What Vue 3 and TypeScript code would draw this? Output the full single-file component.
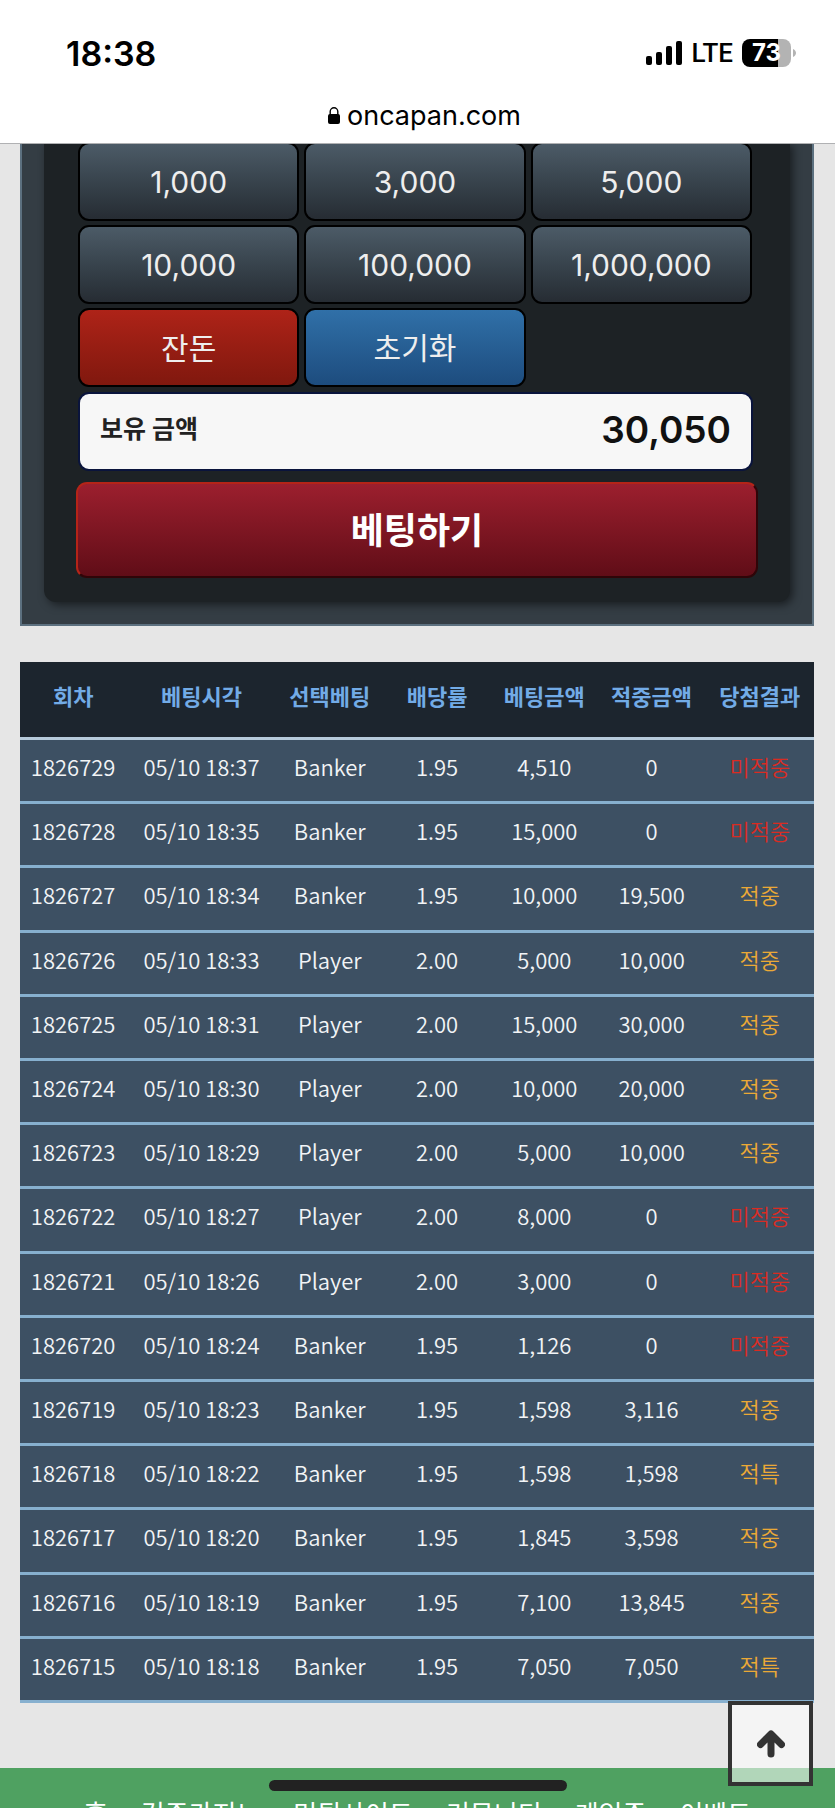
<script setup lang="ts">
interface Bet {
  round: string
  time: string
  pick: string
  odds: string
  stake: string
  payout: string
  result: '적중' | '미적중' | '적특'
}

const amounts: string[] = ['1,000', '3,000', '5,000', '10,000', '100,000', '1,000,000']
const balance = '30,050'
const columns: string[] = ['회차', '베팅시각', '선택베팅', '배당률', '베팅금액', '적중금액', '당첨결과']

const bets: Bet[] = [
  { round: '1826729', time: '05/10 18:37', pick: 'Banker', odds: '1.95', stake: '4,510', payout: '0', result: '미적중' },
  { round: '1826728', time: '05/10 18:35', pick: 'Banker', odds: '1.95', stake: '15,000', payout: '0', result: '미적중' },
  { round: '1826727', time: '05/10 18:34', pick: 'Banker', odds: '1.95', stake: '10,000', payout: '19,500', result: '적중' },
  { round: '1826726', time: '05/10 18:33', pick: 'Player', odds: '2.00', stake: '5,000', payout: '10,000', result: '적중' },
  { round: '1826725', time: '05/10 18:31', pick: 'Player', odds: '2.00', stake: '15,000', payout: '30,000', result: '적중' },
  { round: '1826724', time: '05/10 18:30', pick: 'Player', odds: '2.00', stake: '10,000', payout: '20,000', result: '적중' },
  { round: '1826723', time: '05/10 18:29', pick: 'Player', odds: '2.00', stake: '5,000', payout: '10,000', result: '적중' },
  { round: '1826722', time: '05/10 18:27', pick: 'Player', odds: '2.00', stake: '8,000', payout: '0', result: '미적중' },
  { round: '1826721', time: '05/10 18:26', pick: 'Player', odds: '2.00', stake: '3,000', payout: '0', result: '미적중' },
  { round: '1826720', time: '05/10 18:24', pick: 'Banker', odds: '1.95', stake: '1,126', payout: '0', result: '미적중' },
  { round: '1826719', time: '05/10 18:23', pick: 'Banker', odds: '1.95', stake: '1,598', payout: '3,116', result: '적중' },
  { round: '1826718', time: '05/10 18:22', pick: 'Banker', odds: '1.95', stake: '1,598', payout: '1,598', result: '적특' },
  { round: '1826717', time: '05/10 18:20', pick: 'Banker', odds: '1.95', stake: '1,845', payout: '3,598', result: '적중' },
  { round: '1826716', time: '05/10 18:19', pick: 'Banker', odds: '1.95', stake: '7,100', payout: '13,845', result: '적중' },
  { round: '1826715', time: '05/10 18:18', pick: 'Banker', odds: '1.95', stake: '7,050', payout: '7,050', result: '적특' },
]

const links: string[] = ['홈', '검증카지노', '먹튀사이트', '커뮤니티', '게임존', '이벤트']
</script>

<template>
  <div class="screen">
    <header class="top">
      <div class="status">
        <time class="clock">18:38</time>
        <div class="indicators">
          <svg class="signal" viewBox="0 0 37 24" aria-hidden="true">
            <rect x="0" y="15" width="6" height="9" rx="2" />
            <rect x="10" y="11" width="6" height="13" rx="2" />
            <rect x="20" y="5" width="6" height="19" rx="2" />
            <rect x="30" y="0" width="6" height="24" rx="2" />
          </svg>
          <span class="network">LTE</span>
          <div class="battery">
            <span class="charge">73</span>
            <svg class="cap" viewBox="0 0 4 10" aria-hidden="true"><path d="M1 1C5 3 5 7 1 9Z" /></svg>
          </div>
        </div>
      </div>
      <div class="address">
        <svg class="lock" viewBox="0 0 12 17" aria-hidden="true">
          <rect x="0" y="7" width="12" height="10" rx="2" />
          <path d="M2.2 8V4.6a3.8 3.8 0 0 1 7.6 0V8" fill="none" stroke="#000" stroke-width="1.4" />
        </svg>
        <span>oncapan.com</span>
      </div>
    </header>

    <main class="content">
      <section class="panel">
        <div class="slip">
          <div class="amounts">
            <button v-for="amount in amounts" :key="amount" type="button" class="key">{{ amount }}</button>
            <button type="button" class="key red">잔돈</button>
            <button type="button" class="key blue">초기화</button>
          </div>
          <div class="balance">
            <span class="balance-label">보유 금액</span>
            <strong class="balance-value">{{ balance }}</strong>
          </div>
          <button type="button" class="submit">베팅하기</button>
        </div>
      </section>

      <table class="history">
        <colgroup>
          <col class="c-round" />
          <col class="c-time" />
          <col class="c-pick" />
          <col class="c-wide" />
          <col class="c-pick" />
          <col class="c-wide" />
          <col class="c-wide" />
        </colgroup>
        <thead>
          <tr>
            <th v-for="column in columns" :key="column" scope="col">{{ column }}</th>
          </tr>
        </thead>
        <tbody>
          <tr v-for="bet in bets" :key="bet.round">
            <td>{{ bet.round }}</td>
            <td>{{ bet.time }}</td>
            <td>{{ bet.pick }}</td>
            <td>{{ bet.odds }}</td>
            <td>{{ bet.stake }}</td>
            <td>{{ bet.payout }}</td>
            <td :class="bet.result === '미적중' ? 'lost' : 'won'">{{ bet.result }}</td>
          </tr>
        </tbody>
      </table>
    </main>

    <nav class="footer">
      <a v-for="link in links" :key="link" href="#">{{ link }}</a>
    </nav>

    <button type="button" class="to-top" aria-label="맨 위로">
      <svg viewBox="0 0 28 28" aria-hidden="true">
        <path d="M14 24V5M3.500 14.500 14 4l10.500 10.500" fill="none" stroke="#333" stroke-width="7" stroke-linecap="round" stroke-linejoin="round" />
      </svg>
    </button>
    <div class="home-indicator"></div>
  </div>
</template>

<style>
body {
  margin: 0;
  background: #e6e6e6;
}
</style>

<style scoped>
.screen {
  position: relative;
  display: flex;
  flex-direction: column;
  height: 100vh;
  overflow: hidden;
  font-family: Inter, "Noto Sans CJK KR", sans-serif;
}

.screen * {
  box-sizing: border-box;
}

.top {
  position: relative;
  z-index: 1;
  flex: none;
  padding-top: 32px;
  border-bottom: 1px solid #b0b1b3;
  background: #fff;
  color: #000;
}

.status {
  display: flex;
  align-items: center;
  justify-content: space-between;
  height: 42px;
  padding: 0 39px 0 66px;
}

.clock {
  font-size: 34px;
  font-weight: 600;
}

.indicators {
  display: flex;
  align-items: center;
  gap: 9px;
}

.signal {
  width: 37px;
  height: 24px;
}

.network {
  font-family: Roboto, sans-serif;
  font-size: 26px;
  font-weight: 500;
}

.battery {
  display: flex;
  align-items: center;
  gap: 1px;
}

.charge {
  width: 49px;
  border-radius: 8px;
  background: linear-gradient(90deg, #000 73%, #b3b3b3 73%);
  color: #fff;
  font-size: 24px;
  font-weight: 700;
  line-height: 28px;
  text-align: center;
}

.cap {
  width: 4px;
  height: 10px;
  fill: #b3b3b3;
}

.address {
  display: flex;
  align-items: center;
  justify-content: center;
  gap: 7px;
  height: 69px;
  padding: 13px 0 0 14px;
  font-size: 27px;
}

.lock {
  width: 12px;
  height: 17px;
}

.content {
  flex: none;
  margin-top: -2px;
  padding: 0 21px 65px 20px;
}

.panel {
  padding: 0 22px 22px;
  border: 2px solid #5c707f;
  border-top: 0;
  background: #343d44;
}

.slip {
  padding: 0 32px 24px;
  border-radius: 0 0 12px 12px;
  background: #1d2225;
  box-shadow: 3px 3px 8px rgba(0, 0, 0, 0.5);
}

.amounts {
  display: grid;
  grid-template-columns: repeat(3, 1fr);
  gap: 4px 5px;
  padding: 0 6px 0 2px;
}

.key {
  height: 79px;
  padding: 0;
  border: 2px solid #000;
  border-radius: 11px;
  background: linear-gradient(#4c5b67, #36414a 55%, #262c33);
  color: #eee;
  font-family: inherit;
  font-size: 30px;
  font-weight: 380;
}

.red {
  padding-bottom: 3px;
  background: linear-gradient(#ae2318, #80180e);
}

.blue {
  padding-bottom: 3px;
  background: linear-gradient(#3070a8, #1d4c7e);
}

.balance {
  display: flex;
  align-items: center;
  justify-content: space-between;
  height: 79px;
  margin: 5px 5px 11px 2px;
  padding: 0 20px 4px;
  border: 2px solid #0a143c;
  border-radius: 11px;
  background: #f7f7f7;
  color: #111;
}

.balance-label {
  padding-bottom: 6px;
  color: #222;
  font-size: 25px;
  font-weight: 700;
}

.balance-value {
  font-size: 37px;
  font-weight: 600;
}

.submit {
  display: block;
  width: 100%;
  height: 96px;
  padding: 0 0 5px;
  border: 2px solid;
  border-color: #b52418 #2f0508 #2f0508 #b52418;
  border-radius: 11px;
  background: linear-gradient(#9c1f2e, #600d17);
  color: #fff;
  font-family: inherit;
  font-size: 36px;
  font-weight: 700;
}

.history {
  width: 100%;
  margin-top: 36px;
  table-layout: fixed;
  border-spacing: 0;
  font-family: "Noto Sans CJK KR", sans-serif;
  font-size: 23px;
  line-height: 1.4em;
  text-align: center;
  white-space: nowrap;
}

.c-round,
.c-pick {
  width: 106px;
}

.c-time {
  width: 150px;
}

.c-wide {
  width: 108px;
}

th {
  height: 78px;
  padding: 0 0 8px;
  border-bottom: 3px solid #b6cbdc;
  background: #1c252e;
  color: #72abe6;
  font-size: 22px;
  font-weight: 700;
}

td {
  padding: 10px 0 19px;
  border-bottom: 3px solid #87b0cf;
  background: #3d5063;
  color: #f2f4f6;
  font-size: 22px;
  font-weight: 350;
}

.lost {
  color: #d92c23;
}

.won {
  color: #eba936;
}

.footer {
  display: flex;
  flex: none;
  justify-content: center;
  gap: 33px;
  padding: 26px 0;
  background: #4fa161;
  font-family: "Noto Sans CJK KR", sans-serif;
  font-size: 26px;
  line-height: 38px;
}

.footer a {
  color: #fff;
  text-decoration: none;
}

.to-top {
  position: absolute;
  right: 22px;
  bottom: 22px;
  display: grid;
  place-items: center;
  width: 85px;
  height: 85px;
  padding: 0;
  border: 4px solid #333;
  background: rgba(255, 255, 255, 0.56);
}

.to-top svg {
  width: 28px;
  height: 28px;
}

.home-indicator {
  position: absolute;
  bottom: 17px;
  left: 50%;
  width: 298px;
  height: 11px;
  border-radius: 6px;
  background: #222;
  transform: translateX(-50%);
}
</style>
